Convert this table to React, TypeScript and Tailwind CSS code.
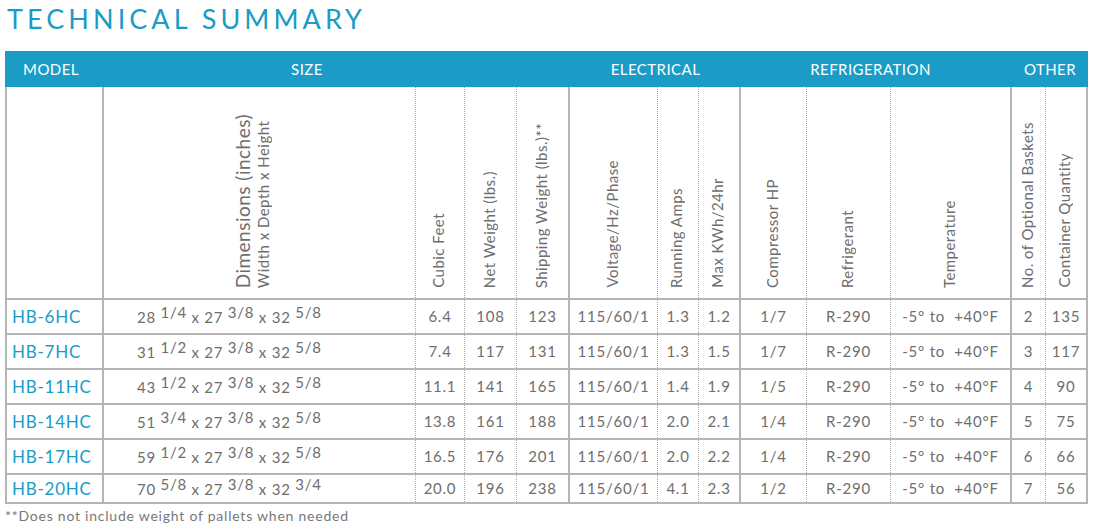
import React from "react";

const grid =
  "grid grid-cols-[97px_312px_49px_52px_53px_88px_41px_42px_66px_84px_121px_34px_42px]";

const solid = "border-r-2 border-[#b5b5b5]";
const dotted = "border-r border-dotted border-[#a9a9a9]";

// right-hand separator of each of the 13 columns
const seps = [solid, dotted, dotted, dotted, solid, dotted, dotted, solid, dotted, dotted, solid, dotted, solid];

const labels = [
  "Cubic Feet",
  "Net Weight (lbs.)",
  "Shipping Weight (lbs.)**",
  "Voltage/Hz/Phase",
  "Running Amps",
  "Max KWh/24hr",
  "Compressor HP",
  "Refrigerant",
  "Temperature",
  "No. of Optional Baskets",
  "Container Quantity",
];

type Dim = [string, string];

const rows: { model: string; dims: Dim[]; values: string[] }[] = [
  {
    model: "HB-6HC",
    dims: [["28", "1/4"], ["27", "3/8"], ["32", "5/8"]],
    values: ["6.4", "108", "123", "115/60/1", "1.3", "1.2", "1/7", "R-290", "-5° to  +40°F", "2", "135"],
  },
  {
    model: "HB-7HC",
    dims: [["31", "1/2"], ["27", "3/8"], ["32", "5/8"]],
    values: ["7.4", "117", "131", "115/60/1", "1.3", "1.5", "1/7", "R-290", "-5° to  +40°F", "3", "117"],
  },
  {
    model: "HB-11HC",
    dims: [["43", "1/2"], ["27", "3/8"], ["32", "5/8"]],
    values: ["11.1", "141", "165", "115/60/1", "1.4", "1.9", "1/5", "R-290", "-5° to  +40°F", "4", "90"],
  },
  {
    model: "HB-14HC",
    dims: [["51", "3/4"], ["27", "3/8"], ["32", "5/8"]],
    values: ["13.8", "161", "188", "115/60/1", "2.0", "2.1", "1/4", "R-290", "-5° to  +40°F", "5", "75"],
  },
  {
    model: "HB-17HC",
    dims: [["59", "1/2"], ["27", "3/8"], ["32", "5/8"]],
    values: ["16.5", "176", "201", "115/60/1", "2.0", "2.2", "1/4", "R-290", "-5° to  +40°F", "6", "66"],
  },
  {
    model: "HB-20HC",
    dims: [["70", "5/8"], ["27", "3/8"], ["32", "3/4"]],
    values: ["20.0", "196", "238", "115/60/1", "4.1", "2.3", "1/2", "R-290", "-5° to  +40°F", "7", "56"],
  },
];

const Dimensions = ({ dims }: { dims: Dim[] }) => (
  <span className="whitespace-nowrap">
    {dims.map(([whole, frac], i) => (
      <React.Fragment key={i}>
        {i > 0 && " x "}
        {whole} <span className="relative -top-[5px]">{frac}</span>
      </React.Fragment>
    ))}
  </span>
);

export default function App() {
  return (
    <div className="min-h-[528px] w-[1098px] bg-white font-['Lato','Open_Sans',sans-serif] text-[#6e6e6e]">
      {/* Title */}
      <h1 className="pl-[7px] pt-[3px] h-[51px] text-[27px] leading-[32px] tracking-[0.15em] text-[#1a9cc6]">
        TECHNICAL SUMMARY
      </h1>

      <div className="ml-[5px] w-[1083px]">
        {/* Group header bar */}
        <div className={`${grid} h-[36px] items-center bg-[#1a9cc6] pl-[2px] text-[15px] tracking-[0.03em] text-white`}>
          <div className="pl-[16px]">MODEL</div>
          <div className="col-span-4 pr-[60px] text-center">SIZE</div>
          <div className="col-span-3 text-center">ELECTRICAL</div>
          <div className="col-span-3 pr-[12px] text-center">REFRIGERATION</div>
          <div className="col-span-2 text-center">OTHER</div>
        </div>

        <div className="border-l-2 border-[#b5b5b5]">
          {/* Rotated column labels */}
          <div className={`${grid} h-[213px] border-b-2 border-[#b5b5b5]`}>
            <div className={seps[0]} />
            <div className={`${seps[1]} flex items-end justify-center pb-[10px] pr-[14px]`}>
              <div className="rotate-180 whitespace-nowrap tracking-[0.03em] [writing-mode:vertical-rl] leading-[20px]">
                <div className="text-[19px]">Dimensions (inches)</div>
                <div className="text-[15px]">Width x Depth x Height</div>
              </div>
            </div>
            {labels.map((label, i) => (
              <div key={label} className={`${seps[i + 2]} flex items-end justify-center pb-[10px] pr-[4px]`}>
                <div className="rotate-180 whitespace-nowrap text-[15px] leading-[16px] tracking-[0.03em] [writing-mode:vertical-rl]">
                  {label}
                </div>
              </div>
            ))}
          </div>

          {/* Data rows */}
          {rows.map((row, r) => (
            <div
              key={row.model}
              className={`${grid} ${r === rows.length - 1 ? "h-[29px]" : "h-[35px]"} items-stretch border-b-2 border-[#b5b5b5] text-[15px] tracking-[0.05em]`}
            >
              <div className={`${seps[0]} flex items-center pl-[5px] text-[17px] text-[#1a9cc6]`}>{row.model}</div>
              <div className={`${seps[1]} flex items-center pl-[33px] pt-[2px]`}>
                <Dimensions dims={row.dims} />
              </div>
              {row.values.map((v, i) => (
                <div key={i} className={`${seps[i + 2]} flex items-center justify-center whitespace-pre`}>
                  {v}
                </div>
              ))}
            </div>
          ))}
        </div>
      </div>

      <p className="pl-[5px] pt-[2px] text-[14px] leading-[20px] tracking-[0.055em] text-[#777]">
        **Does not include weight of pallets when needed
      </p>
    </div>
  );
}
